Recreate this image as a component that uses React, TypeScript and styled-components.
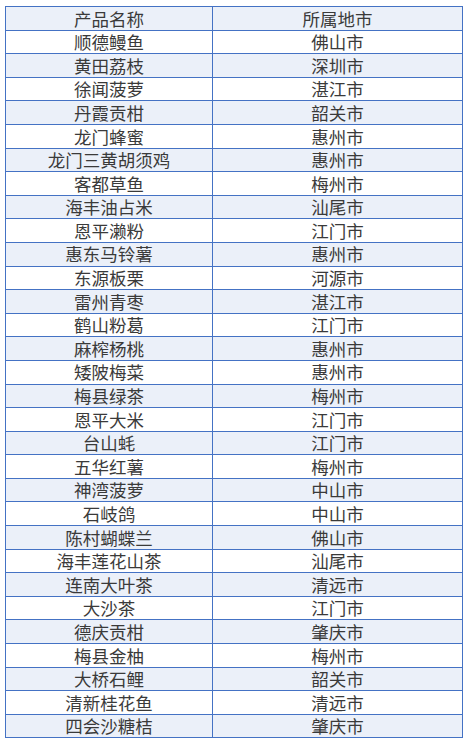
import React from 'react';
import styled, { createGlobalStyle } from 'styled-components';

const GlobalStyle = createGlobalStyle`
  html, body {
    margin: 0;
    padding: 0;
    background: #ffffff;
  }
`;

const Page = styled.div`
  padding: 6px 0 0 5px;
`;

const Table = styled.div`
  width: 458px;
  box-sizing: border-box;
  border: 1px solid #4472c4;
  border-bottom: none;
  font-family: "Noto Sans CJK SC", "Noto Sans", sans-serif;
  font-size: 17.5px;
  color: #3a3a3a;
`;

const Row = styled.div<{ $shaded: boolean }>`
  display: grid;
  grid-template-columns: 206px 1fr;
  height: 23.6px;
  box-sizing: border-box;
  border-bottom: 1px solid #4472c4;
  background: ${(p) => (p.$shaded ? '#ebf0f9' : '#ffffff')};
`;

const Cell = styled.div`
  display: flex;
  align-items: center;
  justify-content: center;
  line-height: 1;
  white-space: nowrap;

  & + & {
    border-left: 1px solid #4472c4;
  }
`;

const rows: [string, string][] = [
  ['顺德鳗鱼', '佛山市'],
  ['黄田荔枝', '深圳市'],
  ['徐闻菠萝', '湛江市'],
  ['丹霞贡柑', '韶关市'],
  ['龙门蜂蜜', '惠州市'],
  ['龙门三黄胡须鸡', '惠州市'],
  ['客都草鱼', '梅州市'],
  ['海丰油占米', '汕尾市'],
  ['恩平濑粉', '江门市'],
  ['惠东马铃薯', '惠州市'],
  ['东源板栗', '河源市'],
  ['雷州青枣', '湛江市'],
  ['鹤山粉葛', '江门市'],
  ['麻榨杨桃', '惠州市'],
  ['矮陂梅菜', '惠州市'],
  ['梅县绿茶', '梅州市'],
  ['恩平大米', '江门市'],
  ['台山蚝', '江门市'],
  ['五华红薯', '梅州市'],
  ['神湾菠萝', '中山市'],
  ['石岐鸽', '中山市'],
  ['陈村蝴蝶兰', '佛山市'],
  ['海丰莲花山茶', '汕尾市'],
  ['连南大叶茶', '清远市'],
  ['大沙茶', '江门市'],
  ['德庆贡柑', '肇庆市'],
  ['梅县金柚', '梅州市'],
  ['大桥石鲤', '韶关市'],
  ['清新桂花鱼', '清远市'],
  ['四会沙糖桔', '肇庆市'],
];

export default function App() {
  return (
    <>
      <GlobalStyle />
      <Page>
        <Table>
          <Row $shaded>
            <Cell>产品名称</Cell>
            <Cell>所属地市</Cell>
          </Row>
          {rows.map(([name, city], i) => (
            <Row key={name} $shaded={i % 2 === 1}>
              <Cell>{name}</Cell>
              <Cell>{city}</Cell>
            </Row>
          ))}
        </Table>
      </Page>
    </>
  );
}
